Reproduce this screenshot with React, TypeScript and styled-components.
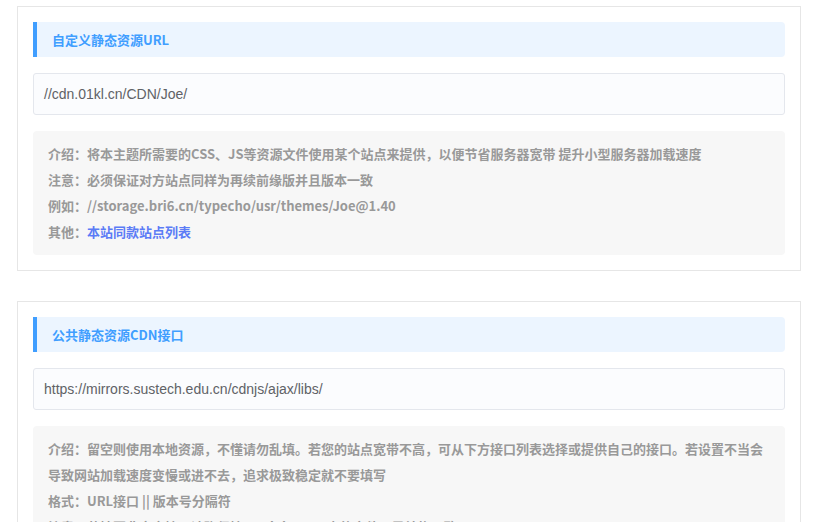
import React from "react";
import styled, { createGlobalStyle } from "styled-components";

const Global = createGlobalStyle`
  html, body { margin: 0; padding: 0; background: #fff; }
  body { font-family: "Noto Sans CJK SC", "Liberation Sans", sans-serif; }
`;

const Page = styled.div`
  padding: 6px 14px 0 17px;
  display: flex;
  flex-direction: column;
  gap: 30px;
`;

const Card = styled.div`
  border: 1px solid #e6e6e6;
  padding: 15px;
  display: flex;
  flex-direction: column;
  gap: 16px;
  background: #fff;
`;

const Header = styled.div`
  height: 35px;
  display: flex;
  align-items: center;
  background: #ecf5ff;
  border-left: 4px solid #409eff;
  border-radius: 0 4px 4px 0;
  padding-left: 15px;
  color: #409eff;
  font-size: 13px;
  font-weight: bold;
  font-family: "Noto Sans CJK SC", sans-serif;
`;

const Input = styled.div`
  height: 40px;
  display: flex;
  align-items: center;
  border: 1px solid #e4e7ed;
  border-radius: 3px;
  background: #fbfcfe;
  padding-left: 10px;
  color: #606266;
  font-size: 14px;
  font-family: Arial, "Liberation Sans", sans-serif;
`;

const Note = styled.div`
  background: #f7f7f7;
  border-radius: 4px;
  padding: 10px 15px;
  color: #999;
  font-size: 13px;
  font-weight: bold;
  line-height: 26px;
  font-family: "Noto Sans CJK SC", sans-serif;
`;

const Line = styled.div``;

const Link = styled.a`
  color: #5b7cf6;
  text-decoration: none;
`;

export default function App() {
  return (
    <>
      <Global />
      <Page>
        <Card>
          <Header>自定义静态资源URL</Header>
          <Input>//cdn.01kl.cn/CDN/Joe/</Input>
          <Note>
            <Line>介绍：将本主题所需要的CSS、JS等资源文件使用某个站点来提供，以便节省服务器宽带 提升小型服务器加载速度</Line>
            <Line>注意：必须保证对方站点同样为再续前缘版并且版本一致</Line>
            <Line>例如：//storage.bri6.cn/typecho/usr/themes/Joe@1.40</Line>
            <Line>其他：<Link href="#">本站同款站点列表</Link></Line>
          </Note>
        </Card>
        <Card>
          <Header>公共静态资源CDN接口</Header>
          <Input>https://mirrors.sustech.edu.cn/cdnjs/ajax/libs/</Input>
          <Note>
            <Line>介绍：留空则使用本地资源，不懂请勿乱填。若您的站点宽带不高，可从下方接口列表选择或提供自己的接口。若设置不当会导致网站加载速度变慢或进不去，追求极致稳定就不要填写</Line>
            <Line>格式：URL接口 || 版本号分隔符</Line>
            <Line>注意：若填写非官方接口请确保接口 cdnjs.com 内的文件目录结构一致</Line>
          </Note>
        </Card>
      </Page>
    </>
  );
}
